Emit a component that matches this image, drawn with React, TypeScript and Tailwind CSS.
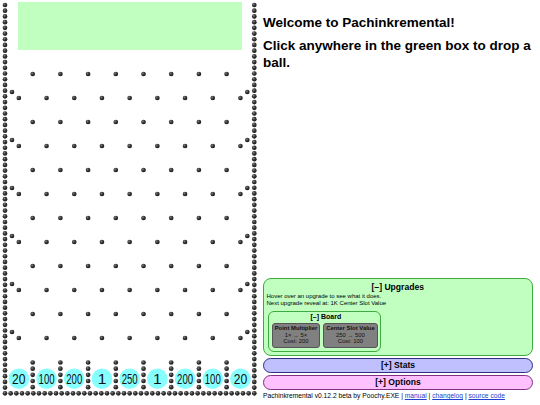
const L = 5;
const R = 254.3;
const BOTTOM = 393.3;
const COL = (R - L) / 9;

type Peg = { x: number; y: number };

function buildPegs(): Peg[] {
  const pegs: Peg[] = [];
  // side walls
  const vStep = (BOTTOM - 5) / 68;
  for (let k = 0; k <= 68; k++) {
    pegs.push({ x: L, y: 5 + k * vStep });
    pegs.push({ x: R, y: 5 + k * vStep });
  }
  // floor
  for (let k = 1; k < 44; k++) {
    pegs.push({ x: L + (k * (R - L)) / 44, y: BOTTOM });
  }
  // staggered rows
  for (let r = 0; r < 6; r++) {
    const ya = 74 + r * 48;
    const yb = 98 + r * 48;
    for (let k = 1; k <= 8; k++) pegs.push({ x: L + k * COL, y: ya });
    for (let k = 0; k < 9; k++) pegs.push({ x: L + (k + 0.5) * COL, y: yb });
    pegs.push({ x: 12, y: yb - 6 });
    pegs.push({ x: 247.3, y: yb - 6 });
  }
  // slot dividers
  for (let k = 1; k <= 8; k++) {
    for (let j = 1; j <= 5; j++) {
      pegs.push({ x: L + k * COL, y: BOTTOM - j * 6.16 });
    }
  }
  return pegs;
}

const pegs = buildPegs();
const slots = [20, 100, 200, 1, 250, 1, 200, 100, 20];

function Board() {
  return (
    <svg width={260} height={405} className="shrink-0 block">
      <defs>
        <radialGradient id="peg" cx="0.38" cy="0.35" r="0.7">
          <stop offset="0%" stopColor="#8a8a8a" />
          <stop offset="40%" stopColor="#3a3a3a" />
          <stop offset="100%" stopColor="#161616" />
        </radialGradient>
      </defs>
      <rect x={18} y={2} width={224} height={48} fill="#c0ffc0" />
      {slots.map((v, i) => {
        const cx = L + (i + 0.5) * COL;
        const s = String(v);
        const len = s.length === 3 ? 16 : s.length === 2 ? 13.5 : undefined;
        return (
          <g key={i}>
            <circle cx={cx} cy={378.8} r={10.3} fill="#88ffff" />
            <text
              x={cx}
              y={384.2}
              fontSize={15.5}
              textAnchor="middle"
              fill="#111"
              fontFamily="'Liberation Sans', Arial, sans-serif"
              textLength={len}
              lengthAdjust={len ? "spacingAndGlyphs" : undefined}
            >
              {s}
            </text>
          </g>
        );
      })}
      {pegs.map((p, i) => (
        <circle key={i} cx={p.x} cy={p.y} r={2.35} fill="url(#peg)" />
      ))}
    </svg>
  );
}

function UpgradeButton({ name, change, cost }: { name: string; change: string; cost: string }) {
  return (
    <div className="rounded-[3px] border border-[#555] bg-[#808080] px-[2px] pt-[1px] pb-[2px] text-center text-[5.9px] leading-[6.7px] text-[#111]">
      <div className="font-bold">{name}</div>
      <div>{change}</div>
      <div>{cost}</div>
    </div>
  );
}

export default function App() {
  return (
    <div className="flex h-[405px] w-[540px] overflow-hidden bg-white font-['Liberation_Sans',Arial,sans-serif] text-black">
      <Board />
      <div className="ml-[3px] flex w-[270px] flex-col">
        <h1 className="mt-[13.5px] text-[13.5px] font-bold leading-[17px]">Welcome to Pachinkremental!</h1>
        <h2 className="mt-[6px] text-[13.5px] font-bold leading-[17px]">
          Click anywhere in the green box to drop a ball.
        </h2>

        <div className="mt-auto flex flex-col gap-[2px] pb-[5px]">
          <div className="rounded-[8px] border border-[#3faa3f] bg-[#c0ffc0] pl-[2.5px] pr-[3px] pt-[2.5px] pb-[3px]">
            <div className="text-center text-[8.6px] font-bold leading-[10px]">[–] Upgrades</div>
            <div className="mt-[1.5px] text-[6px] leading-[7.3px]">
              <div>Hover over an upgrade to see what it does.</div>
              <div>Next upgrade reveal at: 1K Center Slot Value</div>
            </div>
            <div className="ml-[1.5px] mt-[3px] w-[113px] rounded-[6px] border border-[#3faa3f] pl-[2.7px] pt-[1.7px] pb-[3px]">
              <div className="text-center text-[7px] font-bold leading-[8px]">[–] Board</div>
              <div className="mt-[1.6px] flex gap-[3px]">
                <UpgradeButton name="Point Multiplier" change="1× → 5×" cost="Cost: 200" />
                <UpgradeButton name="Center Slot Value" change="250 → 500" cost="Cost: 100" />
              </div>
            </div>
          </div>
          <div className="flex h-[15px] items-center justify-center rounded-[8px] border border-[#303080] bg-[#c0c0ff] text-[8.6px] font-bold">
            [+] Stats
          </div>
          <div className="flex h-[15px] items-center justify-center rounded-[8px] border border-[#803080] bg-[#ffc0ff] text-[8.6px] font-bold">
            [+] Options
          </div>
          <div className="text-[6.7px] leading-[8px] whitespace-nowrap">
            Pachinkremental v0.12.2 beta by Poochy.EXE |{" "}
            <a className="text-[#2040d0] underline">manual</a> |{" "}
            <a className="text-[#2040d0] underline">changelog</a> |{" "}
            <a className="text-[#2040d0] underline">source code</a>
          </div>
        </div>
      </div>
    </div>
  );
}
